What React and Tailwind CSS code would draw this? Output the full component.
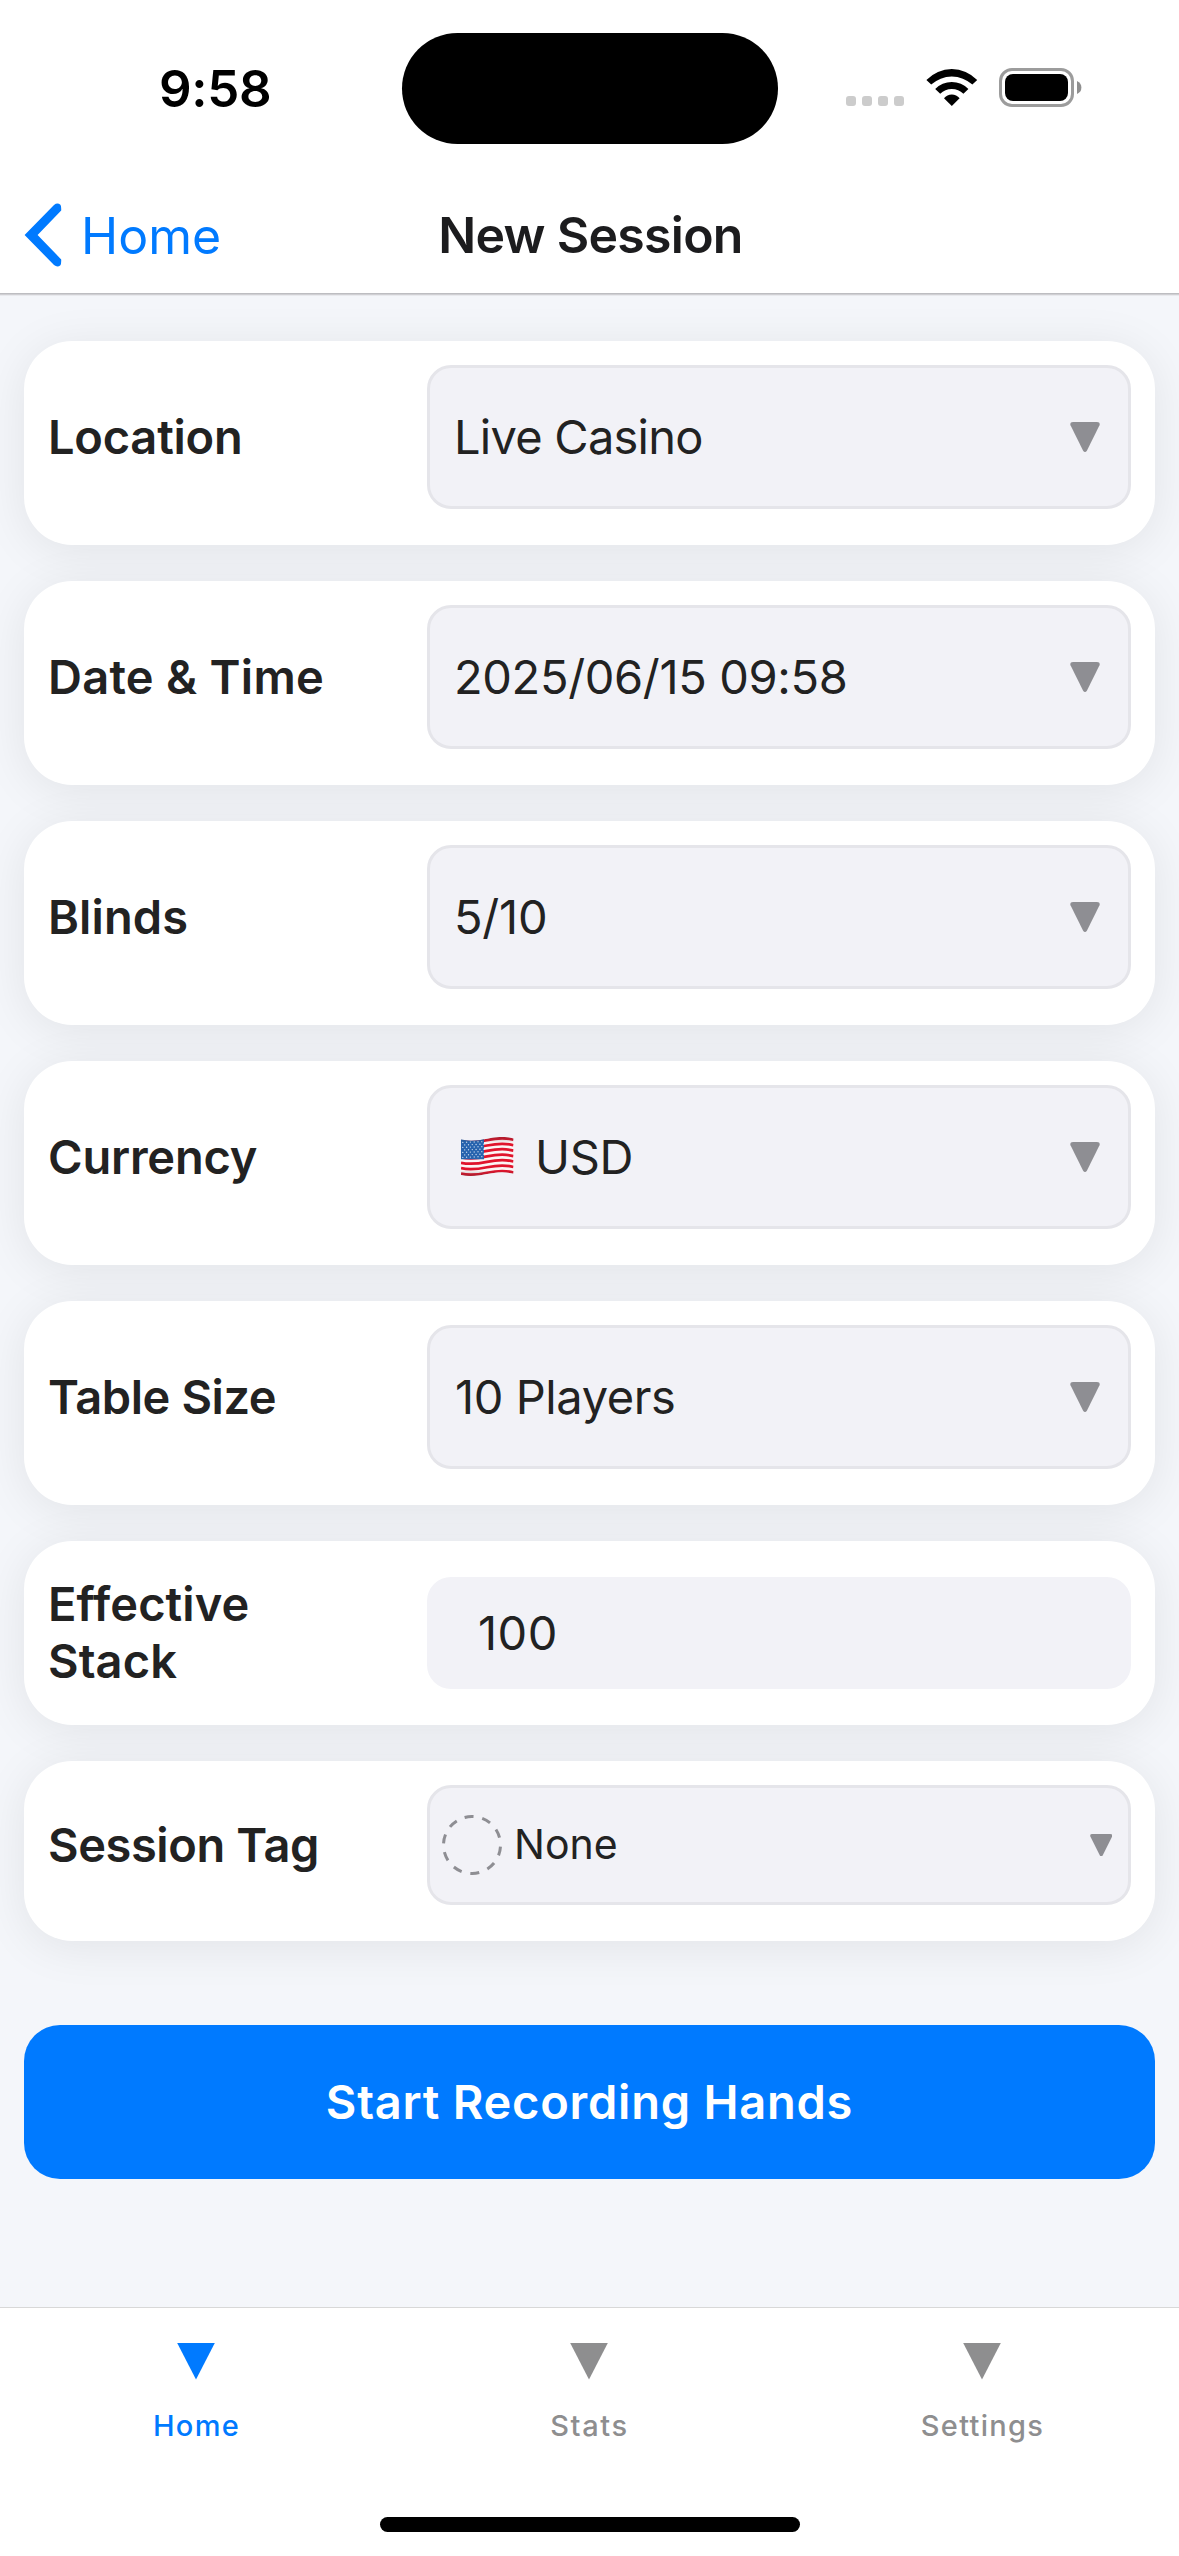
const STRIPE = 35.4 / 13;

/* Top edge of the waving flag, shifted down by y. */
const wave = (y) => `0 ${2.6 + y} C 9 ${4.6 + y}, 17 ${3.6 + y}, 26 ${1.7 + y} S 44 ${-1 + y}, 52.5 ${1.4 + y}`;

function UsFlag() {
  const outline = `M ${wave(0)} L 52.5 ${1.4 + 35.4} C 44 ${34.6}, 35 ${35.2}, 26 ${37.1} S 9 ${40}, 0 ${38} Z`;
  const stars = [];
  for (let r = 0; r < 7; r++) {
    for (let c = 0; c < 6; c++) {
      stars.push({ x: 1.8 + c * 3.8 + (r % 2) * 1.9, y: 5.4 + r * 2.5 - c * 0.15 });
    }
  }
  return (
    <svg width="53" height="39" viewBox="0 0 53 39" aria-label="United States flag">
      <defs>
        <clipPath id="flag-outline">
          <path d={outline} />
        </clipPath>
        <clipPath id="flag-canton">
          <rect x="0" y="0" width="23" height="22.2" />
        </clipPath>
        <linearGradient id="flag-shade" x1="0" y1="0" x2="0" y2="1">
          <stop offset="0" stopColor="#333" stopOpacity="0.3" />
          <stop offset="0.15" stopColor="#333" stopOpacity="0" />
          <stop offset="0.85" stopColor="#333" stopOpacity="0" />
          <stop offset="1" stopColor="#333" stopOpacity="0.3" />
        </linearGradient>
      </defs>
      <g clipPath="url(#flag-outline)">
        <rect width="53" height="39" fill="#fbf5f5" />
        {[0, 2, 4, 6, 8, 10, 12].map((i) => (
          <path key={i} d={`M ${wave((i + 0.5) * STRIPE)}`} fill="none" stroke="#e0142c" strokeWidth={STRIPE} />
        ))}
        <g clipPath="url(#flag-canton)">
          <rect width="23" height="23" fill="#2763ae" />
          {stars.map((s, i) => (
            <circle key={i} cx={s.x} cy={s.y} r="0.7" fill="#c3d6ec" />
          ))}
        </g>
        <rect width="53" height="39" fill="url(#flag-shade)" />
      </g>
    </svg>
  );
}

function Caret({ size = 30 }) {
  return (
    <svg width={size} height={size} viewBox="0 0 30 30" className="shrink-0">
      <path
        d="M3 0 H27 Q30.6 0 29.5 3.2 L17 28.4 Q15 31.4 13 28.4 L0.5 3.2 Q-0.6 0 3 0 Z"
        fill="#8e8e93"
      />
    </svg>
  );
}

function StatusBar() {
  return (
    <div className="flex h-[177px] items-center">
      <div className="w-[402px] pl-[159px] text-[51px] leading-none font-semibold tracking-[-0.3px] text-black">
        9:58
      </div>
      <div className="h-[111px] w-[376px] rounded-full bg-black" />
      <div className="flex items-center pl-[68px]">
        <div className="mt-[25px] flex gap-[6px]">
          <span className="h-[10px] w-[10px] rounded-[3px] bg-[#cccccc]" />
          <span className="h-[10px] w-[10px] rounded-[3px] bg-[#cccccc]" />
          <span className="h-[10px] w-[10px] rounded-[3px] bg-[#cccccc]" />
          <span className="h-[10px] w-[10px] rounded-[3px] bg-[#cccccc]" />
        </div>
        <svg width="52" height="37" viewBox="0 0 52 37" className="-mt-[2px] ml-[22px]">
          <path d="M0.4 11 A35 35 0 0 1 51.2 11 L46.4 15.6 A30.5 30.5 0 0 0 5.2 15.6 Z" />
          <path d="M9.2 20 A23 23 0 0 1 42.4 20 L37.4 24.8 A16.6 16.6 0 0 0 14.2 24.8 Z" />
          <path d="M18 29.3 A10 10 0 0 1 33.6 29.3 L25.8 37 Z" />
        </svg>
        <div className="-mt-[2px] ml-[21px] h-[39px] w-[75px] rounded-[13px] border-[3px] border-[#9c9c9c] p-[3px]">
          <div className="h-full w-full rounded-[8px] bg-black" />
        </div>
        <svg width="5" height="13" viewBox="0 0 5 13" className="-mt-[2px] ml-[3px]">
          <path d="M0 0 Q4.4 2 4.4 6.5 T0 13 Z" fill="#8f8f8f" />
        </svg>
      </div>
    </div>
  );
}

function NavBar() {
  return (
    <div className="grid h-[116px] grid-cols-[1fr_auto_1fr] items-center">
      <div className="flex items-center pl-[24px] text-[50px] leading-none text-[#007aff]">
        <svg width="38" height="64" viewBox="0 0 38 64">
          <path
            d="M0.6 32 L30 2 Q33.5 -0.8 36.4 1.8 Q37.4 3 37.2 7.6 L13.6 32 L37.2 56.4 Q37.4 61 36.4 62.2 Q33.5 64.8 30 62 Z"
            fill="#007aff"
          />
        </svg>
        <span className="mt-px pl-[19px]">Home</span>
      </div>
      <h1 className="pl-[2px] text-[50px] leading-none font-semibold tracking-[-0.73px] text-[#1c1c1e]">
        New Session
      </h1>
      <div />
    </div>
  );
}

function Card({ label, className = "pt-[24px] pb-[36px]", labelClass = "", children }) {
  return (
    <div
      className={`flex items-center rounded-[48px] bg-white px-[24px] shadow-[0_6px_48px_rgba(0,0,0,0.08)] ${className}`}
    >
      <div
        className={`-mt-[2px] w-[379px] pr-[96px] text-[47px] leading-[57px] font-semibold text-[#222222] ${labelClass}`}
      >
        {label}
      </div>
      {children}
    </div>
  );
}

function Select({ children }) {
  return (
    <div className="flex h-[144px] flex-1 items-center justify-between rounded-[24px] border-[3px] border-[#e5e5ea] bg-[#f2f2f7] pr-[28px] pl-[24px] text-[47px] leading-none text-[#222222]">
      <div className="-mt-[2px] flex items-center">{children}</div>
      <Caret />
    </div>
  );
}

function Tab({ label, color, className }) {
  return (
    <div className={`flex flex-1 flex-col items-center pt-[35px] ${className}`}>
      <svg width="38" height="37" viewBox="0 0 38 37" className="mr-[2px]">
        <path d="M0.2 0 H37.8 L19 36.6 Z" fill={color} />
      </svg>
      <span className="mt-[31px] text-[29px] leading-[30px] font-medium">{label}</span>
    </div>
  );
}

export default function App() {
  return (
    <div className="flex h-[2556px] w-[1179px] flex-col overflow-hidden bg-[#f4f6fa] font-['Inter',sans-serif]">
      <header className="relative z-10 bg-white shadow-[0_1px_0_#bdbdc1,0_2px_0_#cfcfd3,0_3px_0_#e8e9ed]">
        <StatusBar />
        <NavBar />
      </header>

      <main className="flex flex-1 flex-col px-[24px] pt-[48px]">
        <div className="flex flex-col gap-[36px]">
          <Card label="Location" labelClass="tracking-[-0.22px]">
            <Select>
              <span className="tracking-[-0.75px]">Live Casino</span>
            </Select>
          </Card>
          <Card label={"Date\u00a0&\u00a0Time"} labelClass="tracking-[0.27px]">
            <Select>
              <span className="tracking-[-0.35px]">2025/06/15 09:58</span>
            </Select>
          </Card>
          <Card label="Blinds" labelClass="tracking-[0.1px]">
            <Select>
              <span className="tracking-[-0.2px]">5/10</span>
            </Select>
          </Card>
          <Card label="Currency" labelClass="tracking-[-0.2px]">
            <Select>
              <span className="mt-px ml-[7px]">
                <UsFlag />
              </span>
              <span className="ml-[21px] tracking-[-0.3px]">USD</span>
            </Select>
          </Card>
          <Card label="Table Size" labelClass="tracking-[-0.4px]">
            <Select>
              <span className="pl-px tracking-[-0.41px]">10 Players</span>
            </Select>
          </Card>
          <Card label="Effective Stack" className="h-[184px]" labelClass="tracking-[0.1px]">
            <div className="flex h-[112px] flex-1 items-center rounded-[24px] bg-[#f2f2f7] pb-[2px] pl-[51px] text-[47px] leading-none tracking-[0.5px] text-[#222222]">
              100
            </div>
          </Card>
          <Card label={"Session\u00a0Tag"} labelClass="tracking-[-0.41px]">
            <div className="flex h-[120px] flex-1 items-center rounded-[24px] border-[3px] border-[#e5e5ea] bg-[#f2f2f7] pr-[16px] pl-[12px] text-[41px] leading-none text-[#222222]">
              <svg width="60" height="60" viewBox="0 0 60 60">
                <circle
                  cx="30"
                  cy="30"
                  r="28.5"
                  fill="none"
                  stroke="#8e8e93"
                  strokeWidth="3"
                  strokeDasharray="9 8.907"
                  transform="rotate(-105 30 30)"
                />
              </svg>
              <span className="-mt-px ml-[12px] flex-1">None</span>
              <Caret size={22.5} />
            </div>
          </Card>
        </div>

        <button className="mt-[84px] h-[154px] rounded-[36px] bg-[#007aff] pb-[2px] text-[47px] leading-none font-semibold tracking-[0.76px] text-white">
          Start Recording Hands
        </button>
      </main>

      <footer className="h-[249px] border-t border-[#d8d8d8] bg-white">
        <nav className="flex h-[209px]">
          <Tab label="Home" color="#007aff" className="tracking-[1.3px] text-[#007aff]" />
          <Tab label="Stats" color="#8e8e8f" className="tracking-[1.6px] text-[#8e8e8f]" />
          <Tab label="Settings" color="#8e8e8f" className="tracking-[1.3px] text-[#8e8e8f]" />
        </nav>
        <div className="mx-auto h-[15px] w-[420px] rounded-full bg-black" />
      </footer>
    </div>
  );
}
